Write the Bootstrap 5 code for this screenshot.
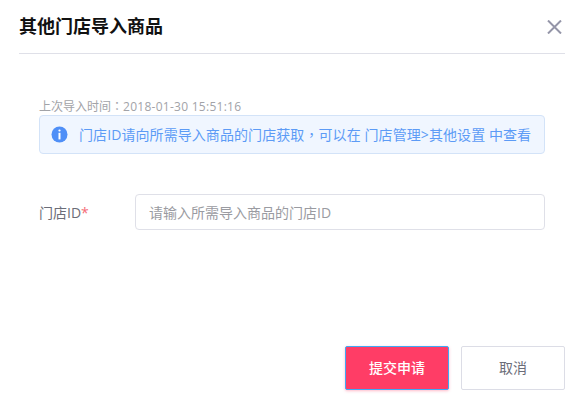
<!DOCTYPE html>
<html lang="zh-CN">
<head>
<meta charset="utf-8">
<title>其他门店导入商品</title>
<link rel="stylesheet" href="https://cdn.jsdelivr.net/npm/bootstrap@5.3.0/dist/css/bootstrap.min.css">
<style>
html,body{height:402px;overflow:hidden;background:#fff}
body{font-family:"Open Sans","Noto Sans CJK SC",sans-serif}
.cjk-punct{font-family:"Noto Sans CJK TC",sans-serif}
.dlg{width:581px;height:402px;padding:0 16px 0 19px}
.dlg-head{height:54px;border-bottom:1px solid #dfe0e8;width:546px}
.dlg-title{font-size:18px;line-height:24px;font-weight:700;color:#111;margin:0;padding-top:14px}
.dlg-close{border:0;background:none;padding:0;width:15px;height:14px;margin-top:20px;margin-right:3px;line-height:0}
.dlg-time{margin:44px 0 0 20px;font-size:12px;line-height:16px;color:#a2a3a8;height:17px;white-space:nowrap}
.dlg-stamp{letter-spacing:.27px}
.dlg-tip{margin:0 0 0 20px;width:506px;height:39px;border:1px solid #d3e3f8;border-radius:4px;background:#f0f6ff;color:#5c9bf6;font-size:14px;line-height:20px;padding-left:11px;white-space:nowrap;letter-spacing:.08px}
.dlg-tip svg{flex:none;margin-right:11px}
.dlg-form{margin:40px 0 0 20px;width:506px}
.dlg-label{width:96px;font-size:14px;color:#6b6d78}
.dlg-label em{font-style:normal;color:#f56c78}
.dlg-input{width:410px;height:36px;border:1px solid #dfe0e8;border-radius:4px;font-size:14px;padding:0 13px;color:#333;box-shadow:none}
.dlg-input::placeholder{color:#9a9ba1}
.dlg-foot{margin-top:116px;width:546px;gap:12px}
.dlg-btn{width:104px;height:44px;border-radius:2px;font-size:14px;line-height:20px;padding:0}
.dlg-ok{background:#ff3d66;border:1px solid #3fa9f5;color:#fff;font-weight:500;box-shadow:0 1px 3px rgba(255,61,102,.35)}
.dlg-ok:hover{background:#ff3d66;border-color:#3fa9f5;color:#fff}
.dlg-no{background:#fff;border:1px solid #dcdde6;color:#6b6d78}
</style>
</head>
<body>
<div class="dlg">
  <div class="dlg-head d-flex justify-content-between align-items-start">
    <h5 class="dlg-title">其他门店导入商品</h5>
    <button type="button" class="dlg-close" aria-label="关闭">
      <svg width="15" height="14" viewBox="0 0 15 14"><path d="M1 .5 14 13.5M14 .5 1 13.5" stroke="#9495a8" stroke-width="2" fill="none"/></svg>
    </button>
  </div>
  <div class="dlg-time">上次导入时间<span class="cjk-punct" lang="zh-TW">：</span><span class="dlg-stamp">2018-01-30 15:51:16</span></div>
  <div class="dlg-tip d-flex align-items-center">
    <svg width="17" height="17" viewBox="0 0 17 17"><circle cx="8.5" cy="8.5" r="8" fill="#4f8ff7"/><rect x="7.4" y="3.4" width="2.2" height="2.2" rx="1" fill="#fff"/><rect x="7.5" y="6.8" width="2" height="6.6" fill="#fff"/></svg>
    <span>门店ID请向所需导入商品的门店获取<span class="cjk-punct" lang="zh-TW">，</span>可以在 门店管理&gt;其他设置 中查看</span>
  </div>
  <form class="dlg-form d-flex align-items-center">
    <label class="dlg-label" for="sid">门店ID<em>*</em></label>
    <input id="sid" class="form-control dlg-input" type="text" placeholder="请输入所需导入商品的门店ID">
  </form>
  <div class="dlg-foot d-flex justify-content-end">
    <button type="button" class="btn dlg-btn dlg-ok">提交申请</button>
    <button type="button" class="btn dlg-btn dlg-no">取消</button>
  </div>
</div>
<script src="https://cdn.jsdelivr.net/npm/bootstrap@5.3.0/dist/js/bootstrap.bundle.min.js"></script>
</body>
</html>
